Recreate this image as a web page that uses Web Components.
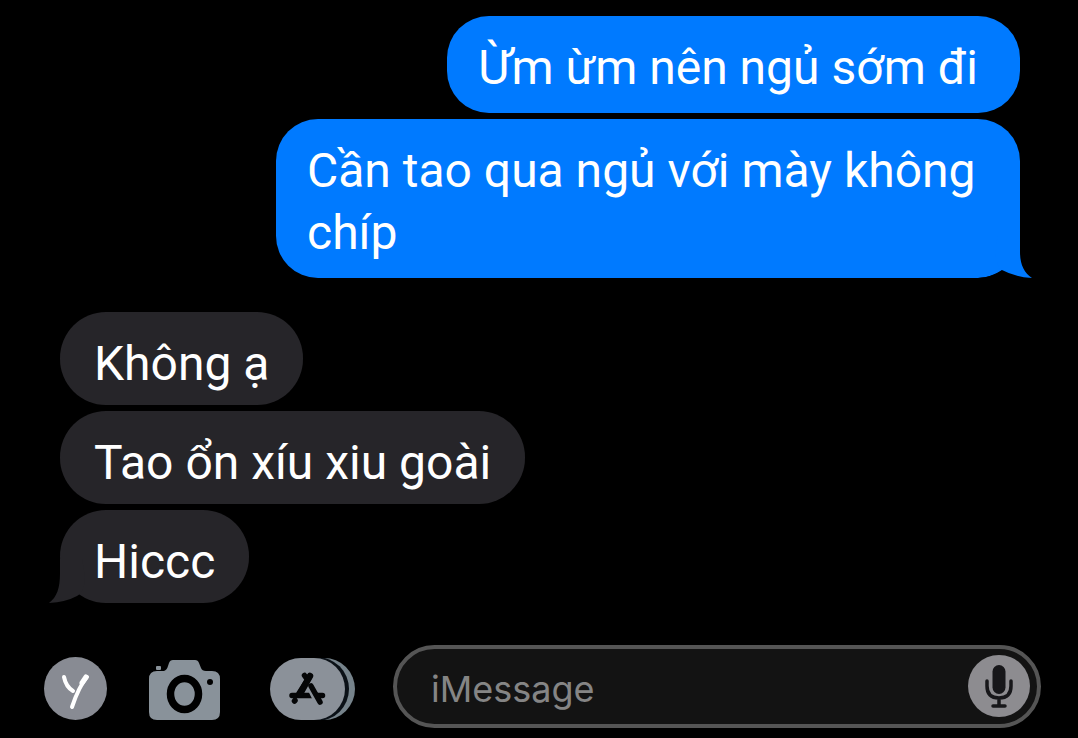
<!DOCTYPE html>
<html lang="vi">
<head>
<meta charset="utf-8">
<meta name="viewport" content="width=device-width, initial-scale=1">
<title>iMessage</title>
<style>
  body { margin: 0; background: #000; color: #fff; font-family: Roboto, "Liberation Sans", sans-serif; }
</style>
</head>
<body>
<chat-screen>
  <message-group side="sent">
    <chat-bubble side="sent">Ừm ừm nên ngủ sớm đi</chat-bubble>
    <chat-bubble side="sent" tail>Cần tao qua ngủ với mày không chíp</chat-bubble>
  </message-group>
  <message-group side="received">
    <chat-bubble side="received">Không ạ</chat-bubble>
    <chat-bubble side="received">Tao ổn xíu xiu goài</chat-bubble>
    <chat-bubble side="received" tail>Hiccc</chat-bubble>
  </message-group>
  <message-composer slot="composer"></message-composer>
</chat-screen>

<template id="chat-screen">
  <style>
    :host { display: flex; flex-direction: column; min-height: 100vh; box-sizing: border-box; padding: 16px 0 10px; }
    main { display: flex; flex-direction: column; gap: 34px; padding: 0 58px 0 60px; }
    footer { margin-top: auto; }
  </style>
  <main><slot></slot></main>
  <footer><slot name="composer"></slot></footer>
</template>

<template id="message-group">
  <style>
    :host { display: flex; flex-direction: column; align-items: flex-start; gap: 6px; }
    :host([side="sent"]) { align-items: flex-end; }
  </style>
  <slot></slot>
</template>

<template id="chat-bubble">
  <style>
    :host { display: block; position: relative; box-sizing: border-box; max-width: calc(100% - 216px); border-radius: 46px; font-size: 48px; line-height: 62px; }
    :host([side="sent"]) { background: #007aff; padding: 21px 42px 14px 31px; border-radius: 42px; }
    :host([side="received"]) { background: #262529; padding: 21px 34px 10px 34px; }
    svg { display: none; position: absolute; bottom: 0; width: 60px; height: 44px; }
    :host([tail][side="sent"]) .sent { display: block; right: -12px; }
    :host([tail][side="received"]) .received { display: block; left: -11px; }
  </style>
  <slot></slot>
  <svg class="sent" viewBox="0 0 60 44" aria-hidden="true">
    <path fill="#000" d="M6 44Q20 43 30 36Q40 44 60 44V45H6Z"/>
    <path fill="#007aff" d="M26 0H48V18C48 30 52 39 60 44Q43 43 30 36Q20 30 26 0Z"/>
  </svg>
  <svg class="received" viewBox="0 0 60 44" aria-hidden="true">
    <path fill="#000" d="M0 44Q18 43 28 37Q38 44 52 44V45H0Z"/>
    <path fill="#262529" d="M33 0H11V14C11 29 8 38 0 44Q17 43 28 37Q40 32 33 0Z"/>
  </svg>
</template>

<template id="message-composer">
  <style>
    :host { display: flex; align-items: center; padding: 0 37px 0 44px; }
    nav { display: flex; align-items: center; flex: none; padding-top: 4px; }
    button { display: block; flex: none; padding: 0; border: 0; background: none; cursor: pointer; }
    svg { display: block; }
    .camera { margin-left: 42px; }
    .apps { margin-left: 50px; }
    .field { display: flex; flex: 1; align-items: center; min-width: 0; margin-left: 38px; padding: 6px 7px 7px 34px; border: 4px solid #555; border-radius: 42px; background: #131313; }
    input { flex: 1; min-width: 0; padding: 6px 0 0; border: 0; outline: 0; background: none; color: #fff; font: 36px/48px Inter, "Liberation Sans", sans-serif; }
    input::placeholder { color: #858585; opacity: 1; }
  </style>
  <nav aria-label="Apps">
    <button aria-label="Y">
      <svg width="63" height="63" viewBox="0 0 63 63"><circle cx="31.500" cy="31.500" r="31.500" fill="#888b93"/><path d="M20 20C21 25 24 31 29 34M43 20C37 27 32 38 28 50" fill="none" stroke="#fff" stroke-width="4" stroke-linecap="round"/><path d="M42 20L38 26" stroke="#fff" stroke-width="5" stroke-linecap="round"/></svg>
    </button>
    <button class="camera" aria-label="Camera">
      <svg width="71" height="62" viewBox="0 0 71 62"><path fill="#89929a" d="M8 13H15Q18 12 19 8L20 5Q21 2 24 2H46Q49 2 50 5L52 10Q53 13 57 13H63Q71 13 71 21V54Q71 62 63 62H8Q0 62 0 54V21Q0 13 8 13Z"/><rect x="7" y="8" width="5" height="4" rx="1" fill="#89929a"/><ellipse cx="35.500" cy="36" rx="14" ry="15.500" fill="none" stroke="#000" stroke-width="7.500"/><circle cx="61" cy="24" r="3" fill="#000"/></svg>
    </button>
    <button class="apps" aria-label="App Store">
      <svg width="85" height="62" viewBox="0 0 85 62"><rect x="16" width="69" height="62" rx="31" fill="#76838b"/><rect x="3" y="-1" width="76" height="64" rx="32" fill="#0b1117"/><rect width="75" height="62" rx="31" fill="#8b9199"/><g fill="none" stroke="#050607" stroke-width="5.500" stroke-linecap="round"><path d="M22 37.500H52.500M40 18L28 37M34.500 17.500L37 21M24.500 43L25 42.500"/></g><path d="M38 26L47 44" stroke="#8b9199" stroke-width="6"/><path d="M41 28L50 44" stroke="#050607" stroke-width="5.500" stroke-linecap="round"/><path d="M40 18L30 36" stroke="#050607" stroke-width="6.500" stroke-linecap="round"/></svg>
    </button>
  </nav>
  <div class="field">
    <input type="text" placeholder="iMessage" aria-label="iMessage">
    <button aria-label="Dictate">
      <svg width="62" height="62" viewBox="0 0 62 62"><circle cx="31" cy="31" r="31" fill="#8d8c90"/><rect x="24.500" y="10" width="13" height="29" rx="6.500" fill="#17171a"/><path d="M19 26V31Q19 43 31 43Q43 43 43 31V26M31 43V51M25 51H37" fill="none" stroke="#17171a" stroke-width="3.500" stroke-linecap="round"/></svg>
    </button>
  </div>
</template>

<script>
  class TemplateElement extends HTMLElement {
    constructor() {
      super();
      const template = document.getElementById(this.localName);
      this.attachShadow({ mode: "open" }).append(template.content.cloneNode(true));
    }
  }
  for (const name of ["chat-screen", "message-group", "chat-bubble", "message-composer"]) {
    customElements.define(name, class extends TemplateElement {});
  }
</script>
</body>
</html>
